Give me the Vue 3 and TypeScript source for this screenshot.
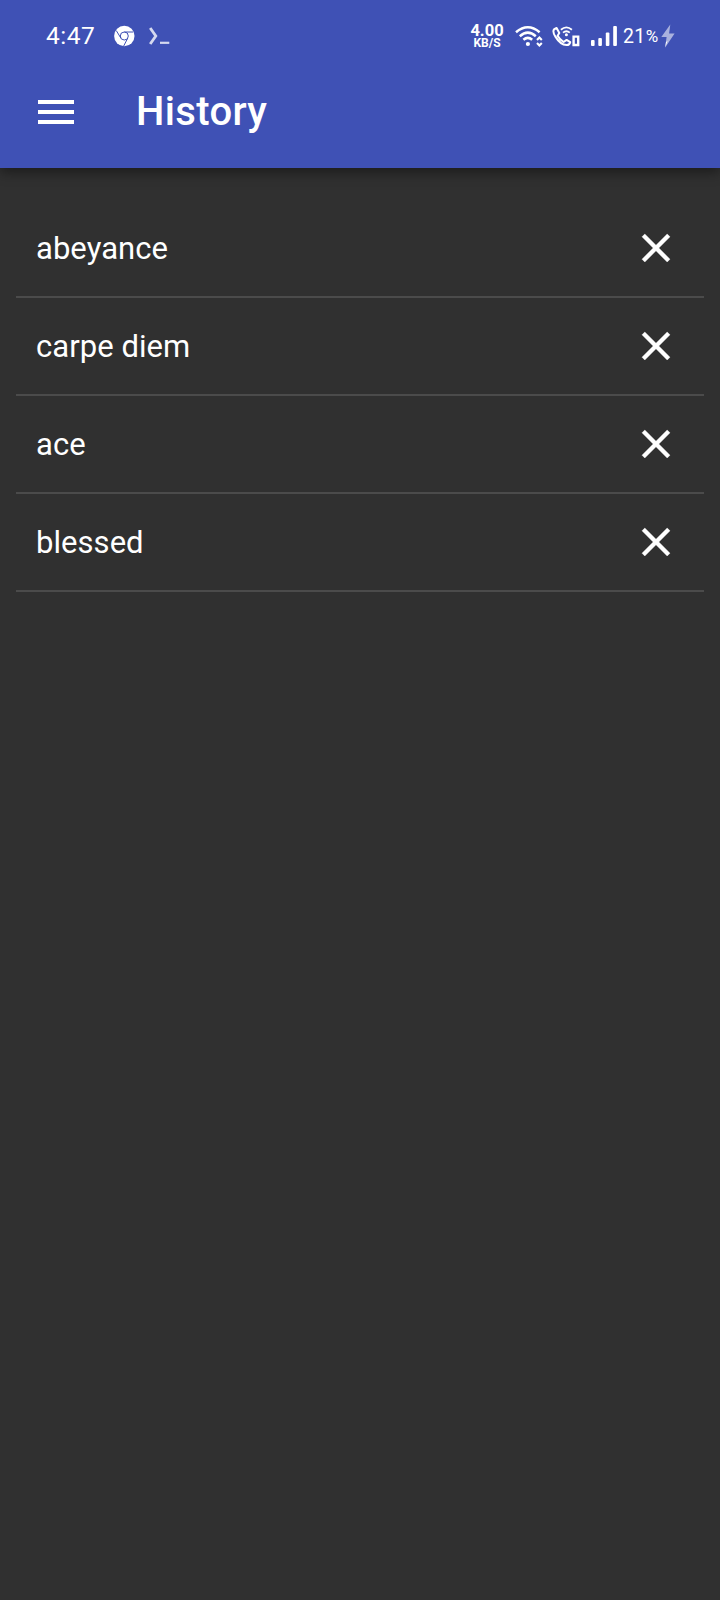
<script setup lang="ts">
import { ref } from 'vue'

const entries = ref<string[]>(['abeyance', 'carpe diem', 'ace', 'blessed'])

function remove(index: number): void {
  entries.value.splice(index, 1)
}
</script>

<template>
  <div class="screen">
    <header class="top">
      <div class="status">
        <span class="clock">4:47</span>
        <svg class="chrome" width="22" height="22" viewBox="0 0 22 22">
          <circle cx="11.3" cy="11" r="10.2" fill="#fff" />
          <g fill="none" stroke="#3f51b5" stroke-width="1">
            <circle cx="11.3" cy="11" r="4" />
            <path d="M11.3 7H20.3M7.8 13L3.3 5.6M14.8 13L10.7 21" />
          </g>
        </svg>
        <svg class="prompt" width="22" height="22" viewBox="0 0 22 22" fill="none" stroke="#d5d9ef">
          <path d="M2.2 3L7.8 11L2.2 19" stroke-width="2.8" />
          <path d="M12 17.8H21.3" stroke-width="2.2" />
        </svg>
        <div class="right">
          <div class="speed">
            <span class="rate">4.00</span>
            <span class="unit">KB/S</span>
          </div>
          <svg class="wifi" width="30" height="22" viewBox="0 0 30 22" fill="none" stroke="#fff">
            <g stroke-width="2.5">
              <path d="M1 7.2Q12.8 -2.8 24.6 7.2" />
              <path d="M4.8 11.2Q12.8 4 20.8 11.2" />
              <path d="M8.4 14.8Q12.8 11 17.2 14.8" />
            </g>
            <circle cx="12.9" cy="19" r="2.1" fill="#fff" stroke="none" />
            <path d="M22 15L24.4 12.6L26.8 15M22 18L24.4 20.4L26.8 18" stroke-width="2.1" />
          </svg>
          <svg class="call" width="28" height="22" viewBox="0 0 28 22" fill="none" stroke="#fff" stroke-width="2" stroke-linejoin="round">
            <path d="M4.6 3L2.2 4.2C.9 5.6 1.3 8.3 3.4 11.6C6.2 16.2 10.5 19.8 14.6 20.1C16.6 20.1 17.8 19 18.2 17.2L14.6 14.9L11.6 17C9 15.4 7 13.4 5.6 10.8L7.3 8Z" />
            <path d="M8.9 4.8Q14.4 0 19.9 4.8M11 7.6Q14.4 4.9 17.8 7.6" stroke-width="1.8" />
            <circle cx="14.4" cy="9.7" r="1.5" fill="#fff" stroke="none" />
            <path d="M21.6 11.6H26.2V20H21.6Z" stroke-width="2.4" stroke-linejoin="miter" />
          </svg>
          <svg class="signal" width="28" height="22" viewBox="0 0 28 22" fill="#fff">
            <rect x="1" y="15" width="3.6" height="6" rx="1" />
            <rect x="8.3" y="13" width="3.6" height="8" rx="1" />
            <rect x="15.8" y="7.5" width="3.6" height="13.5" rx="1" />
            <rect x="23.2" y="1" width="3.7" height="20" rx="1" />
          </svg>
          <span class="battery">21<span class="percent">%</span></span>
          <svg class="bolt" width="14" height="24" viewBox="0 0 14 24">
            <path d="M9.3 .5L.3 13H5.6L4.2 23.6L13.6 9.4H8.1Z" fill="#a9b1de" />
            <path d="M5 18L6.5 17L4.2 23.6Z" fill="#fff" />
          </svg>
        </div>
      </div>
      <div class="toolbar">
        <button class="icon-button" aria-label="Menu">
          <svg width="48" height="48" viewBox="0 0 24 24" fill="#fff">
            <path d="M3 18h18v-2H3v2zm0-5h18v-2H3v2zm0-7v2h18V6H3z" />
          </svg>
        </button>
        <h1 class="title">History</h1>
      </div>
    </header>
    <ul class="list">
      <li v-for="(entry, index) in entries" :key="entry" class="row">
        <span class="word">{{ entry }}</span>
        <button class="icon-button" aria-label="Remove" @click="remove(index)">
          <svg width="48" height="48" viewBox="0 0 24 24" fill="#fff" stroke="#fff" stroke-width="0.2" stroke-linejoin="round">
            <path d="M19 6.41L17.59 5 12 10.59 6.41 5 5 6.41 10.59 12 5 17.59 6.41 19 12 13.41 17.59 19 19 17.59 13.41 12z" />
          </svg>
        </button>
      </li>
    </ul>
  </div>
</template>

<style>
body {
  margin: 0;
  background: #303030;
}
</style>

<style scoped>
.screen {
  min-height: 1600px;
  background: #303030;
  color: #fff;
  font-family: Roboto, "Liberation Sans", sans-serif;
}
.top {
  height: 168px;
  background: #3f51b5;
  box-shadow: 0 4px 12px rgba(0, 0, 0, 0.45);
}
.status {
  box-sizing: border-box;
  display: flex;
  align-items: center;
  height: 72px;
  padding: 0 45px 0 46px;
}
.clock {
  width: 67px;
  font-size: 24.5px;
  line-height: 28px;
  letter-spacing: 0.5px;
}
.prompt {
  margin-left: 13px;
}
.right {
  display: flex;
  align-items: center;
  margin-left: auto;
}
.speed {
  display: flex;
  flex-direction: column;
  align-items: center;
  width: 34px;
  padding-top: 2px;
  font-weight: 700;
}
.rate {
  font-size: 16.5px;
  line-height: 13px;
}
.unit {
  font-size: 12px;
  line-height: 13px;
}
.wifi {
  margin-left: 11px;
}
.call {
  margin-left: 7px;
}
.signal {
  margin-left: 10px;
}
.battery {
  width: 38px;
  padding-top: 2px;
  margin-left: 5px;
  font-size: 19.5px;
  line-height: 24px;
  letter-spacing: 0.4px;
  white-space: nowrap;
}
.percent {
  position: relative;
  top: -1px;
  font-size: 17px;
  letter-spacing: 0;
}
.toolbar {
  display: flex;
  align-items: center;
  height: 80px;
  padding-left: 32px;
}
.icon-button {
  display: block;
  padding: 0;
  border: 0;
  background: none;
}
.icon-button svg {
  display: block;
}
.title {
  margin: 0 0 0 56px;
  font-size: 40px;
  line-height: 48px;
  font-weight: 500;
  letter-spacing: 0.35px;
}
.list {
  margin: 0;
  padding: 32px 16px 0;
  list-style: none;
}
.row {
  box-sizing: border-box;
  display: flex;
  align-items: center;
  justify-content: space-between;
  height: 98px;
  padding: 0 24px 0 20px;
  border-bottom: 2px solid #4b4b4b;
}
.word {
  padding-top: 2px;
  font-size: 31px;
  line-height: 40px;
  letter-spacing: 0.05px;
}
</style>
